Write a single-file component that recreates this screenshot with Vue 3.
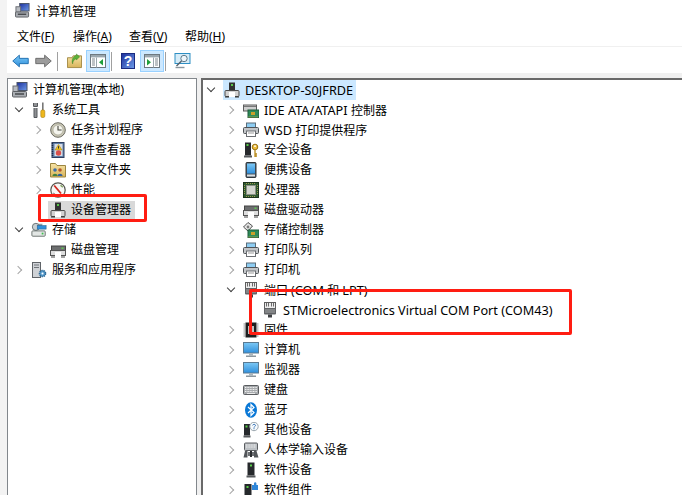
<script setup>
const menus = [
  { label: '文件(', key: 'F' },
  { label: '操作(', key: 'A' },
  { label: '查看(', key: 'V' },
  { label: '帮助(', key: 'H' }
]

const leftTree = [
  { id: 1, text: '计算机管理(本地)', icon: 'mgmt', x: 4, chev: 'none' },
  { id: 2, text: '系统工具', icon: 'tools', x: 4, chev: 'open' },
  { id: 3, text: '任务计划程序', icon: 'clock', x: 23, chev: 'closed' },
  { id: 4, text: '事件查看器', icon: 'log', x: 23, chev: 'closed' },
  { id: 5, text: '共享文件夹', icon: 'share', x: 23, chev: 'closed' },
  { id: 6, text: '性能', icon: 'perf', x: 23, chev: 'closed' },
  { id: 7, text: '设备管理器', icon: 'dev', x: 23, chev: 'blank', selected: true },
  { id: 8, text: '存储', icon: 'storage', x: 4, chev: 'open' },
  { id: 9, text: '磁盘管理', icon: 'disk', x: 23, chev: 'blank' },
  { id: 10, text: '服务和应用程序', icon: 'services', x: 4, chev: 'closed' }
]

const rightTree = [
  { id: 1, text: 'DESKTOP-S0JFRDE', icon: 'dev', x: 1, chev: 'open', root: true },
  { id: 2, text: 'IDE ATA/ATAPI 控制器', icon: 'ide', x: 21, chev: 'closed' },
  { id: 3, text: 'WSD 打印提供程序', icon: 'printer', x: 21, chev: 'closed' },
  { id: 4, text: '安全设备', icon: 'security', x: 21, chev: 'closed' },
  { id: 5, text: '便携设备', icon: 'portable', x: 21, chev: 'closed' },
  { id: 6, text: '处理器', icon: 'cpu', x: 21, chev: 'closed' },
  { id: 7, text: '磁盘驱动器', icon: 'disk', x: 21, chev: 'closed' },
  { id: 8, text: '存储控制器', icon: 'ctrl', x: 21, chev: 'closed' },
  { id: 9, text: '打印队列', icon: 'printer', x: 21, chev: 'closed' },
  { id: 10, text: '打印机', icon: 'printer', x: 21, chev: 'closed' },
  { id: 11, text: '端口 (COM 和 LPT)', icon: 'port', x: 21, chev: 'open' },
  { id: 12, text: 'STMicroelectronics Virtual COM Port (COM43)', icon: 'port', x: 40, chev: 'blank' },
  { id: 13, text: '固件', icon: 'chip', x: 21, chev: 'closed' },
  { id: 14, text: '计算机', icon: 'monitor', x: 21, chev: 'closed' },
  { id: 15, text: '监视器', icon: 'monitor', x: 21, chev: 'closed' },
  { id: 16, text: '键盘', icon: 'keyboard', x: 21, chev: 'closed' },
  { id: 17, text: '蓝牙', icon: 'bluetooth', x: 21, chev: 'closed' },
  { id: 18, text: '其他设备', icon: 'other', x: 21, chev: 'closed' },
  { id: 19, text: '人体学输入设备', icon: 'hid', x: 21, chev: 'closed' },
  { id: 20, text: '软件设备', icon: 'softdev', x: 21, chev: 'closed' },
  { id: 21, text: '软件组件', icon: 'softcomp', x: 21, chev: 'closed' }
]

const segments = (text) =>
  text.split(/([A-Za-z][\x20-\x7e]*)/).filter(Boolean).map((t, i) => ({
    i,
    t,
    latin: /^[A-Za-z]/.test(t)
  }))
</script>

<template>
  <div class="window">
    <svg class="defs" aria-hidden="true">
      <defs>
        <linearGradient id="sky" x1="0" y1="0" x2="0" y2="1"><stop offset="0" stop-color="#7cc8f5"/><stop offset="1" stop-color="#2f8fdc"/></linearGradient>
        <linearGradient id="gold" x1="0" y1="0" x2="0" y2="1"><stop offset="0" stop-color="#f6e3a6"/><stop offset="1" stop-color="#d9b45a"/></linearGradient>
        <linearGradient id="navy" x1="0" y1="0" x2="1" y2="1"><stop offset="0" stop-color="#1c2f9c"/><stop offset="1" stop-color="#6e9be8"/></linearGradient>
      </defs>
      <symbol id="mgmt" viewBox="0 0 16 16">
        <rect x="5" y="0.5" width="10" height="8" fill="url(#navy)" stroke="#4a5468"/>
        <rect x="1" y="4" width="5" height="6" fill="#b8bcc2" stroke="#6a6d72"/>
        <rect x="0.5" y="9.5" width="14" height="5.5" rx="1" fill="#a9adb2" stroke="#5c5f63"/>
        <path d="M3 12h9" stroke="#3f4245" stroke-width="1.4"/>
      </symbol>
      <symbol id="tools" viewBox="0 0 16 16">
        <path d="M4.5 1v3M4.5 6v9" stroke="#8d8f92" stroke-width="3"/>
        <path d="M2.5 1v3.5h4V1" fill="none" stroke="#55585c"/>
        <path d="M3 6v9.5h3V6" fill="none" stroke="#55585c"/>
        <rect x="11" y="0.5" width="1.6" height="8" fill="#777"/>
        <rect x="9.8" y="8" width="4" height="7.5" rx="1.4" fill="#eeb71c" stroke="#a67c10" stroke-width=".6"/>
      </symbol>
      <symbol id="clock" viewBox="0 0 16 16">
        <circle cx="8" cy="8" r="7.3" fill="#c9c7b6" stroke="#6b6a60"/>
        <circle cx="8" cy="8" r="5" fill="#f5f5ee" stroke="#9c9a8a" stroke-width=".6"/>
        <path d="M8 4v4h3.6" fill="none" stroke="#45463f" stroke-width="1.1"/>
      </symbol>
      <symbol id="log" viewBox="0 0 16 16">
        <rect x="2" y="0.5" width="12" height="15" fill="#5f7fa8" stroke="#2f3f5f"/>
        <path d="M2.5 1v14" stroke="#1f2a45" stroke-width="1.4" stroke-dasharray="1 1"/>
        <rect x="4.5" y="2" width="8" height="12" fill="#d9dde6"/>
        <path d="M8.5 2.5 12 8H5z" fill="#f2c623" stroke="#9b7a08" stroke-width=".5"/>
        <path d="M8.5 4.2v2.4" stroke="#333"/>
        <circle cx="8.5" cy="11" r="2.7" fill="#d94f4a"/>
      </symbol>
      <symbol id="share" viewBox="0 0 16 16">
        <path d="M0.5 4V1.5h5l1.5 2h8.5V15H.5z" fill="url(#gold)" stroke="#9b8540"/>
        <circle cx="5" cy="8" r="1.8" fill="#3f6ea8"/>
        <path d="M2.5 14c0-3 5-3 5 0z" fill="#41813f"/>
        <circle cx="10" cy="8" r="1.8" fill="#b6582a"/>
        <path d="M7.5 14c0-3 5-3 5 0z" fill="#2f5f9e"/>
      </symbol>
      <symbol id="perf" viewBox="0 0 16 16">
        <circle cx="8" cy="8" r="7.2" fill="#f7f7f5" stroke="#55554f" stroke-width="1.2"/>
        <path d="M4.2 3.5 11 11.5" stroke="#cf2a22" stroke-width="1.8"/>
        <path d="M10.5 3.2l2.3 2" stroke="#7c9e5a" stroke-width="1.4"/>
        <path d="M3 11l2 1" stroke="#888"/>
      </symbol>
      <symbol id="dev" viewBox="0 0 16 16">
        <rect x="5" y="0.5" width="6" height="8" fill="#333"/>
        <rect x="7" y="2" width="2" height="2" fill="#58c84a"/>
        <rect x="1" y="8.5" width="14" height="6" rx="1" fill="#d2d2d2" stroke="#4c4c4c"/>
        <rect x="5" y="10" width="6" height="5" fill="#fff"/>
        <path d="M1 15h4M11 15h4" stroke="#333" stroke-width="1.2"/>
      </symbol>
      <symbol id="disk" viewBox="0 0 16 16">
        <rect x="1.5" y="4" width="14" height="4.5" fill="#6d6f70" stroke="#444"/>
        <rect x="11.5" y="5.5" width="2" height="1.4" fill="#5fd24f"/>
        <rect x="0.5" y="8.5" width="15" height="5" fill="#dedede" stroke="#555"/>
        <rect x="5" y="10" width="6" height="5" fill="#fff"/>
        <path d="M1 15h4M11 15h4" stroke="#444" stroke-width="1.2"/>
      </symbol>
      <symbol id="storage" viewBox="0 0 18 16">
        <path d="M4 1h9l-1 4H4z" fill="#8fa0a8"/>
        <circle cx="5.5" cy="4.5" r="4" fill="#c8cfd2" stroke="#5f6a6e"/>
        <rect x="7" y="3" width="10" height="4" fill="#2f8fdc" stroke="#20608f" stroke-width=".6"/>
        <rect x="1" y="9" width="15" height="6" rx="1" fill="#e2e6e4" stroke="#616a66"/>
        <rect x="12" y="11" width="2" height="2" fill="#3fbf4f"/>
      </symbol>
      <symbol id="services" viewBox="0 0 16 16">
        <rect x="1.5" y="0.5" width="8" height="15" fill="#cfd2d6" stroke="#5f6368"/>
        <path d="M3 3h5M3 5.5h5" stroke="#6f7378"/>
        <circle cx="11.5" cy="11.5" r="3" fill="#5b9fd0" stroke="#2e6a96" stroke-dasharray="1.4 .7" stroke-width="1.6"/>
        <circle cx="11.5" cy="11.5" r="1" fill="#fff"/>
      </symbol>
      <symbol id="ide" viewBox="0 0 16 16">
        <rect x="0.5" y="3" width="13" height="6" fill="#cfcfcf" stroke="#5c5c5c"/>
        <path d="M1 4.5h12" stroke="#777"/>
        <rect x="5" y="8" width="11" height="7.5" fill="#2d8a58" stroke="#1e5c3d"/>
        <rect x="8" y="10" width="4" height="3" fill="#c8a02a"/>
        <path d="M5.5 15h10" stroke="#d6b84a" stroke-dasharray="1 1"/>
      </symbol>
      <symbol id="printer" viewBox="0 0 16 16">
        <rect x="3.5" y="1" width="9" height="4.5" fill="#8ecdf2" stroke="#5a6d7a"/>
        <rect x="0.5" y="5.5" width="15" height="6" rx="1" fill="#c2c5c8" stroke="#4f5256"/>
        <rect x="3.5" y="9" width="9" height="5.5" fill="#fff" stroke="#6b6e72"/>
        <path d="M5 11h6" stroke="#9a9a9a"/>
      </symbol>
      <symbol id="security" viewBox="0 0 16 16">
        <rect x="2" y="0.5" width="6" height="13" fill="#26292c"/>
        <rect x="3.5" y="2" width="2" height="2" fill="#58d04a"/>
        <rect x="1" y="13.5" width="8" height="2" fill="#55585b"/>
        <circle cx="12" cy="5" r="2.8" fill="#eebd3c" stroke="#9a7414"/>
        <circle cx="12" cy="4.2" r=".9" fill="#fff"/>
        <path d="M12 7.5v7.5M12 12h2M12 14h2" stroke="#b88a1c" stroke-width="1.3" fill="none"/>
      </symbol>
      <symbol id="portable" viewBox="0 0 16 16">
        <rect x="3" y="0.5" width="10" height="15" rx="1" fill="#48525a" stroke="#2f363c"/>
        <rect x="4" y="1.5" width="8" height="10" fill="url(#sky)"/>
        <rect x="4" y="12.5" width="8" height="2" fill="#d9dfe3"/>
      </symbol>
      <symbol id="cpu" viewBox="0 0 16 16">
        <rect x="0.5" y="0.5" width="15" height="15" fill="#2f5a31" stroke="#1b331c"/>
        <rect x="3.5" y="3.5" width="9" height="9" fill="#d4d6d0" stroke="#8a8f84"/>
        <path d="M1.5 3v10M14.5 3v10M3 1.5h10M3 14.5h10" stroke="#c9b35c" stroke-width=".7" stroke-dasharray="1 1"/>
      </symbol>
      <symbol id="ctrl" viewBox="0 0 16 16">
        <path d="M5 0.5 9.5 4 5 9 0.5 5z" fill="#e8e8e8" stroke="#4f4f4f"/>
        <circle cx="5" cy="5" r="1.4" fill="#7c7c7c"/>
        <rect x="5" y="8" width="11" height="7.5" fill="#2d8a58" stroke="#1e5c3d"/>
        <rect x="8" y="10" width="4" height="3" fill="#c8a02a"/>
        <path d="M5.5 15h10" stroke="#d6b84a" stroke-dasharray="1 1"/>
      </symbol>
      <symbol id="port" viewBox="0 0 16 16">
        <rect x="2.5" y="0.5" width="11" height="6" fill="#ececec" stroke="#5f5f5f"/>
        <path d="M4.5 1v3.5M6.5 1v3.5M9.5 1v3.5M11.5 1v3.5" stroke="#6a6a6a"/>
        <rect x="2" y="6" width="12" height="6.5" rx="1" fill="#626467"/>
        <path d="M3 8h10M3 10h10" stroke="#a4a6a8"/>
        <rect x="6" y="12.5" width="4" height="3" fill="#3d3f42"/>
      </symbol>
      <symbol id="chip" viewBox="0 0 16 16">
        <rect x="2.5" y="0.5" width="11" height="15" fill="#1e1f20"/>
        <rect x="5" y="4" width="6" height="8" fill="#bfc1c2"/>
        <path d="M1.5 1.5v13M14.5 1.5v13" stroke="#8c8e90" stroke-width="2" stroke-dasharray="1 1"/>
      </symbol>
      <symbol id="monitor" viewBox="0 0 16 16">
        <rect x="0.5" y="0.5" width="15" height="10.5" fill="url(#sky)" stroke="#5a7a92"/>
        <rect x="6" y="11" width="4" height="2.5" fill="#aab4ba"/>
        <rect x="3" y="13.5" width="10" height="1.5" fill="#8c979e"/>
      </symbol>
      <symbol id="keyboard" viewBox="0 0 16 16">
        <rect x="0.5" y="3.5" width="15" height="9" rx="1" fill="#a8abae" stroke="#5a5d60"/>
        <path d="M2 5.5h12M2 7.5h12M2 9.5h12" stroke="#f1f1f1" stroke-dasharray="1 .6"/>
        <path d="M4 11.5h8" stroke="#e8e8e8"/>
      </symbol>
      <symbol id="bluetooth" viewBox="0 0 16 16">
        <ellipse cx="8" cy="8" rx="6" ry="7.8" fill="#0a78d6"/>
        <path d="M5 5l6 5.5-3 3V2.5l3 3L5 11" fill="none" stroke="#fff" stroke-width="1.2"/>
      </symbol>
      <symbol id="other" viewBox="0 0 16 16">
        <rect x="1" y="2" width="6" height="11.5" fill="#26292c"/>
        <rect x="2.5" y="3.5" width="2" height="2" fill="#58d04a"/>
        <rect x="0.5" y="13.5" width="7" height="2" fill="#55585b"/>
        <circle cx="11" cy="4.5" r="4.2" fill="#f7fafc" stroke="#9aa5ad"/>
        <path d="M9.6 3.4c.3-1.4 2.8-1.4 2.9 0 0 1.2-1.5 1-1.5 2.2M11 6.2v1" fill="none" stroke="#3a76b8" stroke-width="1"/>
      </symbol>
      <symbol id="hid" viewBox="0 0 16 16">
        <rect x="1.5" y="1" width="13" height="7.5" rx="1" fill="#bcc0c4" stroke="#5a5d60"/>
        <path d="M3 3h10M3 5h10" stroke="#eee" stroke-dasharray="1 .6"/>
        <path d="M0.5 15.5 2 9h2.5v6.5zM11 15.5V9h2.5L15.5 15.5z" fill="#53565a"/>
        <rect x="5" y="10" width="6" height="4" fill="#6d7074"/>
        <rect x="7" y="9" width="2" height="6" fill="#2b2d30"/>
      </symbol>
      <symbol id="softdev" viewBox="0 0 16 16">
        <rect x="4.5" y="0.5" width="7" height="13" fill="#26292c"/>
        <rect x="7" y="2.5" width="2" height="2" fill="#58d04a"/>
        <rect x="3.5" y="13.5" width="9" height="2" fill="#55585b"/>
      </symbol>
      <symbol id="softcomp" viewBox="0 0 16 16">
        <rect x="1.5" y="2" width="7" height="14" fill="#26292c"/>
        <rect x="3.5" y="4" width="2" height="2" fill="#58d04a"/>
        <path d="M9 3h2V1.5a1.2 1.2 0 0 1 2.4 0V3H15v5H9z" fill="#2f86d8"/>
      </symbol>
      <symbol id="back" viewBox="0 0 18 14">
        <path d="M.8 7 7.8.8v3.4h9.4v5.6H7.8v3.4z" fill="url(#sky)" stroke="#1f6fb0"/>
      </symbol>
      <symbol id="forward" viewBox="0 0 18 14">
        <path d="M17.2 7 10.2.8v3.4H.8v5.6h9.4v3.4z" fill="#9c9c9c" stroke="#6a6a6a"/>
      </symbol>
      <symbol id="up" viewBox="0 0 16 16">
        <path d="M.5 15V4.5h5l1-2h9V15z" fill="url(#gold)" stroke="#a38a44"/>
        <path d="M6 11c0-3 2-5 4-5.5V7l3.5-3.5L10 .5V2C6.5 2.5 4.5 7 6 11z" fill="#5cb23a" stroke="#3a7f22" stroke-width=".5"/>
      </symbol>
      <symbol id="tree" viewBox="0 0 16 14">
        <rect x=".5" y=".5" width="15" height="13" fill="#fff" stroke="#6d7880"/>
        <rect x="1" y="1" width="14" height="2.4" fill="#9aa6ae"/>
        <path d="M2 5h3M2 7h3M2 9h3M2 11h3" stroke="#7c868c"/>
        <path d="M6.5 3.5v10" stroke="#9aa6ae"/>
        <path d="M13 5v6.5L9 8.2z" fill="#1f9f3a"/>
      </symbol>
      <symbol id="action" viewBox="0 0 16 14">
        <rect x=".5" y=".5" width="15" height="13" fill="#fff" stroke="#6d7880"/>
        <rect x="1" y="1" width="14" height="2.4" fill="#9aa6ae"/>
        <path d="M11 5h3M11 7h3M11 9h3M11 11h3" stroke="#7c868c"/>
        <path d="M9.5 3.5v10" stroke="#9aa6ae"/>
        <path d="M3 5v6.5L7 8.2z" fill="#1f9f3a"/>
      </symbol>
      <symbol id="help" viewBox="0 0 14 16">
        <rect x=".5" y=".5" width="13" height="15" fill="url(#navy)" stroke="#1a2a80"/>
      </symbol>
      <symbol id="connect" viewBox="0 0 16 16">
        <rect x=".5" y=".5" width="15" height="10" fill="#d6ecf8" stroke="#2e8fc4"/>
        <circle cx="9.5" cy="5.5" r="3.2" fill="#eef6fb" stroke="#607a8a"/>
        <path d="M7 8 2 13" stroke="#55606a" stroke-width="1.4"/>
        <path d="M1 14.5h9" stroke="#8a969e" stroke-width="1.4"/>
      </symbol>
    </svg>

    <header class="title">
      <svg class="title-icon"><use href="#mgmt" /></svg>
      <span>计算机管理</span>
    </header>

    <nav class="menu">
      <span v-for="m in menus" :key="m.key" class="menu-item">{{ m.label }}<u>{{ m.key }}</u>)</span>
    </nav>

    <div class="toolbar">
      <svg class="tb-arrow"><use href="#back" /></svg>
      <svg class="tb-arrow tb-next"><use href="#forward" /></svg>
      <i class="sep first"></i>
      <svg class="tb-icon up"><use href="#up" /></svg>
      <span class="toggle"><svg class="tb-pane"><use href="#tree" /></svg></span>
      <i class="sep"></i>
      <span class="help"><svg class="help-bg"><use href="#help" /></svg><b>?</b></span>
      <span class="toggle action"><svg class="tb-pane"><use href="#action" /></svg></span>
      <i class="sep"></i>
      <svg class="tb-icon connect"><use href="#connect" /></svg>
    </div>

    <main class="panes">
      <section class="pane left">
        <div v-for="r in leftTree" :key="r.id" class="row" :style="{ paddingLeft: r.x + 'px' }">
          <span v-if="r.chev !== 'none'" class="chev" :class="r.chev"></span>
          <div class="node" :class="{ selected: r.selected }">
            <svg class="icon"><use :href="'#' + r.icon" /></svg>
            <span class="label"><span v-for="s in segments(r.text)" :key="s.i" :class="{ latin: s.latin }">{{ s.t }}</span></span>
          </div>
        </div>
      </section>
      <section class="pane right">
        <div v-for="r in rightTree" :key="r.id" class="row" :style="{ paddingLeft: r.x + 'px' }">
          <span class="chev" :class="r.chev"></span>
          <div class="node" :class="{ root: r.root }">
            <svg class="icon"><use :href="'#' + r.icon" /></svg>
            <span class="label"><span v-for="s in segments(r.text)" :key="s.i" :class="{ latin: s.latin }">{{ s.t }}</span></span>
          </div>
        </div>
      </section>
    </main>

    <div class="mark mark-left"></div>
    <div class="mark mark-right"></div>
  </div>
</template>

<style scoped>
.window {
  position: relative;
  width: 682px;
  height: 495px;
  box-sizing: border-box;
  padding-left: 7px;
  overflow: hidden;
  display: flex;
  flex-direction: column;
  background: #f3f3f3;
  font-family: "Noto Sans", "Noto Sans CJK SC", sans-serif;
  font-size: 12px;
  color: #000;
}
.defs { position: absolute; width: 0; height: 0; }
.title {
  height: 21px;
  flex: none;
  display: flex;
  align-items: center;
  gap: 6px;
  padding-left: 8px;
  box-sizing: border-box;
  background: #fff;
}
.title-icon { width: 15px; height: 15px; }
.menu {
  height: 25px;
  flex: none;
  display: flex;
  align-items: center;
  padding: 4px 0 0 10px;
  box-sizing: border-box;
  gap: 17px;
  background: #fff;
}
.menu-item { white-space: nowrap; width: 39px; }
.toolbar {
  height: 24px;
  flex: none;
  display: flex;
  align-items: center;
  padding: 2px 0 0 5px;
  border-top: 1px solid #f0f0f0;
  background: #fff;
}
.tb-arrow { width: 17px; height: 14px; flex: none; }
.tb-next { margin-left: 6px; }
.sep { width: 1px; height: 19px; background: #a0a0a0; margin-left: 1px; flex: none; }
.sep.first { margin-left: 5px; }
.tb-icon { width: 15px; height: 16px; flex: none; }
.up { margin-left: 9px; }
.toggle {
  width: 22px;
  height: 20px;
  margin-left: 4px;
  background: #cce8ff;
  border: 1px solid #99d1ff;
  display: flex;
  align-items: center;
  justify-content: center;
  flex: none;
}
.toggle.action { margin-left: 5px; }
.tb-pane { width: 16px; height: 14px; }
.help {
  position: relative;
  width: 14px;
  height: 16px;
  margin-left: 9px;
  display: flex;
  align-items: center;
  justify-content: center;
  flex: none;
}
.help-bg { position: absolute; inset: 0; width: 14px; height: 16px; }
.help b {
  position: relative;
  color: #fff;
  font: bold 14px "Liberation Sans", sans-serif;
}
.connect { margin-left: 8px; width: 17px; }
.panes {
  flex: 1;
  min-height: 0;
  display: flex;
  background: #f0f0f0;
  padding-top: 5px;
  gap: 4px;
}
.pane {
  background: #fff;
  overflow: hidden;
  box-sizing: border-box;
}
.left {
  width: 190px;
  flex: none;
  padding-top: 1px;
  border: 1px solid #82878c;
  border-bottom: 0;
}
.right {
  flex: 1;
  border-left: 2px solid #696969;
  border-top: 2px solid #696969;
}
.row {
  height: 20px;
  display: flex;
  align-items: center;
  white-space: nowrap;
}
.chev {
  width: 19px;
  height: 20px;
  flex: none;
  position: relative;
}
.chev.closed::before,
.chev.open::before {
  content: "";
  position: absolute;
  width: 5px;
  height: 5px;
  border-right: 1.5px solid #a6a6a6;
  border-top: 1.5px solid #a6a6a6;
  box-sizing: content-box;
}
.chev.closed::before { left: 3px; top: 6.5px; transform: rotate(45deg); }
.chev.open::before {
  left: 4px;
  top: 5px;
  transform: rotate(135deg);
  border-color: #404040;
}
.icon { width: 16px; height: 16px; flex: none; }
.label { margin-left: 5px; line-height: 18px; }
.latin { font-size: 12.7px; }
.node { display: flex; align-items: center; height: 20px; }
.node.selected {
  background: #d9d9d9;
  height: 18px;
  margin-left: -2px;
  padding: 0 4px 0 2px;
}
.node.root { background: #cce8ff; padding: 0 3px 0 1px; }
.mark {
  position: absolute;
  border: 3px solid #ff1d12;
  border-radius: 2px;
  box-sizing: border-box;
}
.mark-left { left: 38px; top: 194px; width: 109px; height: 28px; }
.mark-right { left: 249px; top: 289px; width: 323px; height: 46px; }
</style>

<style>
html, body { margin: 0; overflow: hidden; background: #fff; }
</style>
